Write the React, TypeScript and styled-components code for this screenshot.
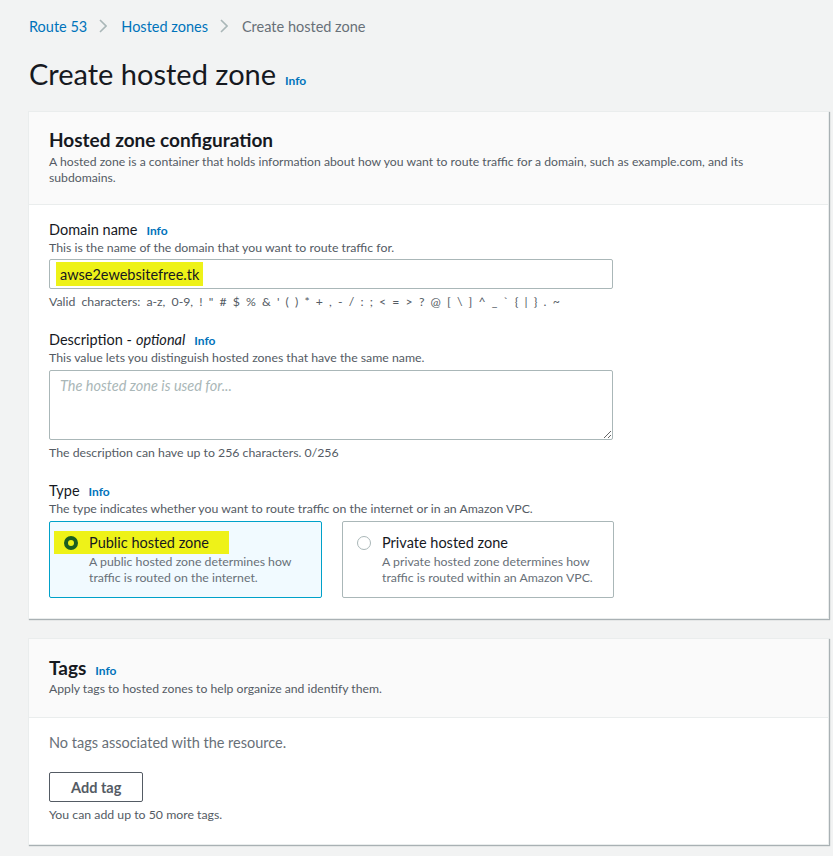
import React from 'react'
import styled, { createGlobalStyle } from 'styled-components'

const GlobalStyle = createGlobalStyle`
  html, body {
    margin: 0;
    padding: 0;
    background: #f2f3f3;
  }
  body {
    font-family: Lato, "Noto Sans", sans-serif;
    color: #16191f;
  }
  * {
    box-sizing: border-box;
  }
`

const Page = styled.div`
  width: 833px;
  min-height: 856px;
  padding: 15px 4px 0 28px;
  background: #f2f3f3;
`

const Breadcrumbs = styled.nav`
  display: flex;
  align-items: center;
  height: 20px;
  margin-top: 1px;
  padding-left: 1px;
  font-size: 14.5px;
`

const Crumb = styled.a<{ $current?: boolean }>`
  color: ${(p) => (p.$current ? '#687078' : '#0073bb')};
  text-decoration: none;
`

const Chevron = styled.span`
  display: inline-flex;
  margin: 0 14px 0 12px;
  color: #aab7b8;
`

const TitleRow = styled.div`
  display: flex;
  align-items: baseline;
  margin-top: 20px;
  padding-left: 1px;
`

const PageTitle = styled.h1`
  margin: 0;
  font-size: 29px;
  font-weight: 400;
  line-height: 36px;
  color: #16191f;
`

const Info = styled.a`
  margin-left: 9px;
  font-size: 12px;
  font-weight: 700;
  color: #0073bb;
  text-decoration: none;
`

const Panel = styled.section<{ $top: number }>`
  margin-top: ${(p) => p.$top}px;
  background: #fff;
  border: 1px solid #eaeded;
  box-shadow: 1px 1px 1px 0 rgba(0, 28, 36, 0.3);
`

const PanelHeader = styled.header<{ $pad: string }>`
  padding: ${(p) => p.$pad};
  background: #fafafa;
  border-bottom: 1px solid #eaeded;
`

const PanelTitle = styled.h2`
  display: flex;
  align-items: baseline;
  height: 24px;
  margin: 0;
  font-size: 19px;
  font-weight: 700;
  line-height: 24px;
  color: #16191f;
`

const PanelDesc = styled.p<{ $top?: number }>`
  margin: ${(p) => p.$top ?? 2}px 0 0;
  max-width: 740px;
  font-size: 12.2px;
  line-height: 16px;
  color: #545b64;
`

const PanelBody = styled.div<{ $pad: string }>`
  padding: ${(p) => p.$pad};
`

const Field = styled.div<{ $gap?: number }>`
  margin-top: ${(p) => p.$gap ?? 0}px;
  width: 564px;
`

const Label = styled.label`
  display: flex;
  align-items: baseline;
  font-size: 14.5px;
  line-height: 19px;
  color: #16191f;

  em {
    margin-left: 4px;
    font-style: italic;
  }
`

const Hint = styled.div<{ $top?: number; $wide?: boolean }>`
  margin-top: ${(p) => p.$top ?? 0}px;
  font-size: 12.3px;
  line-height: 16px;
  color: #545b64;
  word-spacing: ${(p) => (p.$wide ? '3px' : 'normal')};
`

const Input = styled.div`
  display: flex;
  align-items: center;
  height: 30px;
  margin-top: 3px;
  padding: 0 6px;
  border: 1px solid #aab7b8;
  border-radius: 2px;
  background: #fff;
  font-size: 14.5px;
`

const Marked = styled.span`
  display: inline-flex;
  align-items: center;
  background: #eef218;
  color: #16191f;
`

const TypedValue = styled(Marked)`
  height: 24px;
  padding: 0 4px;
`

const TextArea = styled.textarea`
  display: block;
  width: 564px;
  height: 70px;
  margin-top: 4px;
  padding: 4px 10px;
  border: 1px solid #aab7b8;
  border-radius: 2px;
  font-family: Lato, "Noto Sans", sans-serif;
  font-size: 14.5px;
  line-height: 22px;
  resize: vertical;

  &::placeholder {
    color: #aab7b8;
    font-style: italic;
  }
`

const Tiles = styled.div`
  display: grid;
  grid-template-columns: 273px 272px;
  column-gap: 20px;
  margin-top: 4px;
`

const Tile = styled.div<{ $selected?: boolean }>`
  height: 77px;
  padding: 9px 14px 0 14px;
  border: 1px solid ${(p) => (p.$selected ? '#00a1c9' : '#aab7b8')};
  border-radius: 2px;
  background: ${(p) => (p.$selected ? '#f1faff' : '#fff')};
`

const TileHead = styled.div`
  display: flex;
  align-items: center;
  height: 23px;
  font-size: 14.5px;
`

const SelectedHead = styled(Marked)`
  height: 23px;
  margin-left: -10px;
  padding: 0 20px 0 10px;
`

const Radio = styled.span<{ $checked?: boolean }>`
  flex: none;
  width: 14px;
  height: 14px;
  margin-right: 11px;
  border-radius: 50%;
  border: ${(p) => (p.$checked ? '4px solid #1b5e20' : '1px solid #aab7b8')};
  background: ${(p) => (p.$checked ? 'transparent' : '#fff')};
`

const TileText = styled.div`
  padding-left: 25px;
  font-size: 12.3px;
  line-height: 16px;
  color: #687078;
`

const EmptyNote = styled.div`
  font-size: 14.5px;
  line-height: 20px;
  color: #687078;
`

const Button = styled.button`
  display: block;
  height: 30px;
  margin-top: 19px;
  padding: 0 21px;
  border: 1px solid #545b64;
  border-radius: 2px;
  background: #fff;
  font-family: Lato, "Noto Sans", sans-serif;
  font-size: 14.5px;
  font-weight: 700;
  color: #545b64;
`

const ChevronIcon = () => (
  <svg width="8" height="14" viewBox="0 0 8 14" fill="none">
    <path d="M1 1l6 6-6 6" stroke="currentColor" strokeWidth="1.6" />
  </svg>
)

const App = () => (
  <>
    <GlobalStyle />
    <Page>
      <Breadcrumbs>
        <Crumb href="#">Route 53</Crumb>
        <Chevron>
          <ChevronIcon />
        </Chevron>
        <Crumb href="#">Hosted zones</Crumb>
        <Chevron>
          <ChevronIcon />
        </Chevron>
        <Crumb $current>Create hosted zone</Crumb>
      </Breadcrumbs>

      <TitleRow>
        <PageTitle>Create hosted zone</PageTitle>
        <Info href="#">Info</Info>
      </TitleRow>

      <Panel $top={19}>
        <PanelHeader $pad="16px 20px 18px 20px">
          <PanelTitle>Hosted zone configuration</PanelTitle>
          <PanelDesc>
            A hosted zone is a container that holds information about how you want to route traffic for a
            domain, such as example.com, and its subdomains.
          </PanelDesc>
        </PanelHeader>
        <PanelBody $pad="15px 20px 20px 20px">
          <Field>
            <Label>
              Domain name <Info href="#">Info</Info>
            </Label>
            <Hint>This is the name of the domain that you want to route traffic for.</Hint>
            <Input>
              <TypedValue>awse2ewebsitefree.tk</TypedValue>
            </Input>
            <Hint $top={5} $wide>
              Valid characters: a-z, 0-9, ! " # $ % &amp; ' ( ) * + , - / : ; &lt; = &gt; ? @ [ \ ] ^ _ ` {'{'} | {'}'} . ~
            </Hint>
          </Field>

          <Field $gap={20}>
            <Label>
              Description -<em>optional</em> <Info href="#">Info</Info>
            </Label>
            <Hint>This value lets you distinguish hosted zones that have the same name.</Hint>
            <TextArea placeholder="The hosted zone is used for..." />
            <Hint $top={5}>The description can have up to 256 characters. 0/256</Hint>
          </Field>

          <Field $gap={20}>
            <Label>
              Type <Info href="#">Info</Info>
            </Label>
            <Hint>The type indicates whether you want to route traffic on the internet or in an Amazon VPC.</Hint>
            <Tiles>
              <Tile $selected>
                <TileHead>
                  <SelectedHead>
                    <Radio $checked />
                    Public hosted zone
                  </SelectedHead>
                </TileHead>
                <TileText>
                  A public hosted zone determines how traffic is routed on the internet.
                </TileText>
              </Tile>
              <Tile>
                <TileHead>
                  <Radio />
                  Private hosted zone
                </TileHead>
                <TileText>
                  A private hosted zone determines how traffic is routed within an Amazon VPC.
                </TileText>
              </Tile>
            </Tiles>
          </Field>
        </PanelBody>
      </Panel>

      <Panel $top={19}>
        <PanelHeader $pad="17px 20px 20px 20px">
          <PanelTitle>
            Tags <Info href="#">Info</Info>
          </PanelTitle>
          <PanelDesc $top={1}>Apply tags to hosted zones to help organize and identify them.</PanelDesc>
        </PanelHeader>
        <PanelBody $pad="15px 20px 21px 20px">
          <EmptyNote>No tags associated with the resource.</EmptyNote>
          <Button>Add tag</Button>
          <Hint $top={5}>You can add up to 50 more tags.</Hint>
        </PanelBody>
      </Panel>
    </Page>
  </>
)

export default App
